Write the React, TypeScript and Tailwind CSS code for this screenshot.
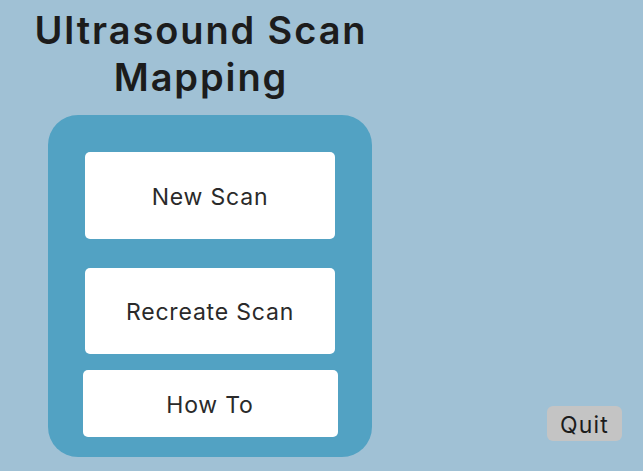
export default function App() {
  const font = { fontFamily: 'Inter, "Noto Sans", sans-serif' };

  return (
    <div
      style={font}
      className="flex h-[471px] w-[643px] justify-between overflow-hidden bg-[#a0c1d5]"
    >
      <div className="flex w-[420px] flex-col items-center">
        <h1 className="mt-[7px] ml-[-18px] text-center text-[38px] font-semibold leading-[47px] tracking-[0.05em] text-[#1c1c1c]">
          Ultrasound Scan
          <br />
          Mapping
        </h1>
        <div className="mt-[14px] flex h-[342px] w-[324px] flex-col items-center rounded-[30px] bg-[#52a2c3] pt-[37px]">
          <button className="h-[87px] w-[250px] rounded-[5px] bg-white pt-[3px] text-[23px] tracking-[0.035em] text-[#2a2a2a]">
            New Scan
          </button>
          <button className="mt-[29px] h-[86px] w-[250px] rounded-[5px] bg-white pt-[3px] text-[23px] tracking-[0.035em] text-[#2a2a2a]">
            Recreate Scan
          </button>
          <button className="mt-[16px] h-[67px] w-[255px] rounded-[5px] bg-white pt-[3px] text-[23px] tracking-[0.035em] text-[#2a2a2a]">
            How To
          </button>
        </div>
      </div>
      <button className="mr-[21px] mb-[30px] h-[35px] w-[75px] self-end rounded-[6px] bg-[#c4c4c4] pt-[2px] text-[23px] tracking-[0.05em] text-[#1c1c1c]">
        Quit
      </button>
    </div>
  );
}
